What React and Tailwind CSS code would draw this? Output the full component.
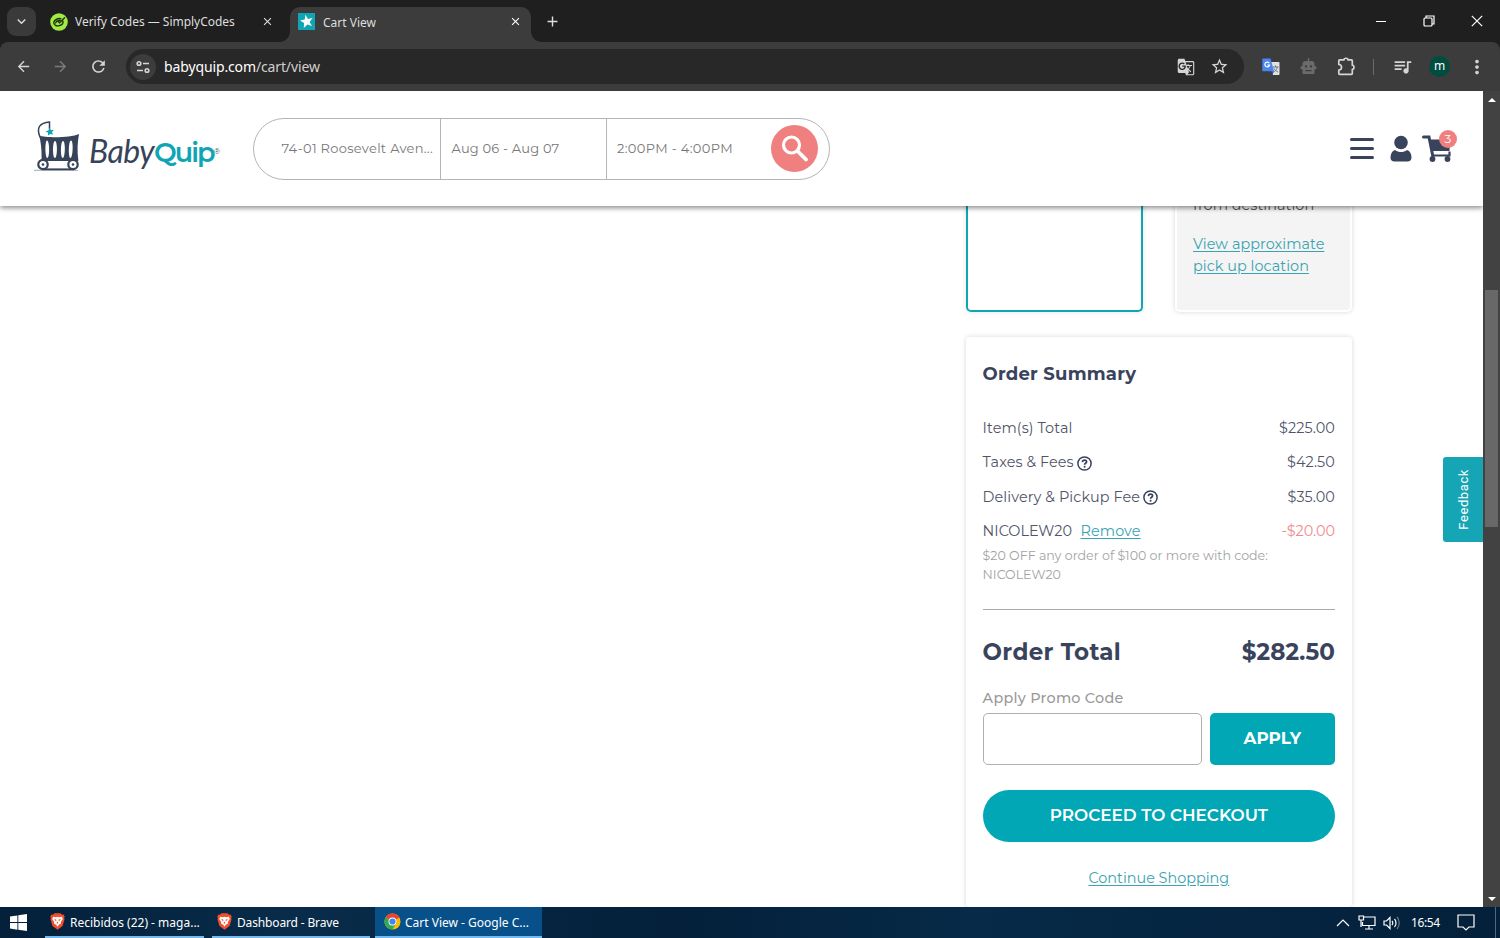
import React from 'react';
import {
  MdGTranslate,
  MdOutlineStarBorder,
  MdQueueMusic,
  MdArrowBack,
  MdArrowForward,
  MdRefresh,
  MdClose,
  MdAdd,
  MdMoreVert,
  MdKeyboardArrowDown,
} from 'react-icons/md';

const TabStrip = () => (
  <div className="flex h-[42px] shrink-0 items-start bg-[#1f1f1f] text-[#dedede]">
    <div className="ml-[7px] mt-[7px] flex h-[29px] w-[29px] items-center justify-center rounded-[9px] bg-[#3a3a3a]">
      <MdKeyboardArrowDown className="h-[17px] w-[17px]" />
    </div>
    <div className="flex h-[43px] w-[254px] items-center pl-[14px] pr-[16px]">
      <svg className="h-[18px] w-[18px]" viewBox="0 0 18 18" fill="none">
        <circle cx="9" cy="9" r="8.8" fill="#a3e945" />
        <path d="M14.6 4.8 9.6 9.8 7.7 8.2M10.8 5.6C7.6 5 4.2 6.8 3.8 9.4c-.4 2.8 3 4 5.6 3.2 2.4-.7 4-2.6 3.5-4.5M5.6 10l1.2-2 3.2-.7" stroke="#17320c" strokeWidth="1.4" strokeLinecap="round" />
      </svg>
      <span className="ml-[7px] flex-1 whitespace-nowrap pt-px text-[12px] tracking-[-0.02px]">Verify Codes — SimplyCodes</span>
      <MdClose className="h-[13px] w-[13px]" />
    </div>
    <div className="relative mt-[7px] flex h-[35px] w-[241px] items-center rounded-t-[10px] bg-[#3c3c3c] pb-[6px] pl-[8px] pr-[9px]">
      <span className="absolute -left-[10px] bottom-0 h-[10px] w-[10px] bg-[radial-gradient(circle_at_0_0,transparent_9.5px,#3c3c3c_10px)]" />
      <span className="absolute -right-[10px] bottom-0 h-[10px] w-[10px] bg-[radial-gradient(circle_at_100%_0,transparent_9.5px,#3c3c3c_10px)]" />
      <svg className="h-[17px] w-[17px]" viewBox="0 0 17 17">
        <rect width="17" height="17" fill="#10a5b5" />
        <path d="M7.4 1.8 10 6l4.600-1-3 3.900 2.400 4.200-4.500-1.600-3.700 3.500.3-5.100-4-2.500 4.700-1z" fill="#fff" />
      </svg>
      <span className="ml-[8px] flex-1 pt-[2px] text-[12px]">Cart View</span>
      <MdClose className="h-[13px] w-[13px] text-white" />
    </div>
    <MdAdd className="ml-[13px] mt-[13px] h-[17px] w-[17px]" />
    <div className="ml-auto mr-[17px] mt-[15px] flex items-center gap-[36px] text-white">
      <svg className="h-3 w-3" viewBox="0 0 12 12"><path d="M1 6.5h10" stroke="currentColor" /></svg>
      <svg className="h-3 w-3" viewBox="0 0 12 12" fill="none" stroke="currentColor" strokeWidth="1.2">
        <rect x="1" y="3" width="8" height="8" rx="1" />
        <path d="M3 3V1h8v8H9" />
      </svg>
      <svg className="h-3 w-3" viewBox="0 0 12 12"><path d="m.8.8 10.4 10.4M11.2.8.8 11.2" stroke="currentColor" strokeWidth="1.2" /></svg>
    </div>
  </div>
);

const Toolbar = () => (
  <div className="bg-[#1f1f1f]">
    <div className="flex h-[49px] items-center rounded-t-[8px] bg-[#3c3c3c] text-[#d5d5d5]">
      <MdArrowBack className="ml-[15px] h-[17px] w-[17px]" />
      <MdArrowForward className="ml-[20px] h-[17px] w-[17px] text-[#7b7b7b]" />
      <MdRefresh className="ml-[20px] h-[19px] w-[19px]" />
      <div className="ml-[18px] flex h-[35px] w-[1118px] items-center rounded-full bg-[#282828] pl-[4px] pr-[15px]">
        <div className="flex h-[26px] w-[26px] items-center justify-center rounded-full bg-[#3c3c3c]">
          <svg className="h-[14px] w-[14px]" viewBox="0 0 14 14" fill="none" stroke="currentColor" strokeWidth="1.6">
            <circle cx="3" cy="3.5" r="1.8" />
            <path d="M7 3.5h6M1 10.5h6" />
            <circle cx="11" cy="10.5" r="1.8" />
          </svg>
        </div>
        <span className="ml-[8px] flex-1 text-[14px] tracking-[-0.13px] text-[#d0d0d0]">
          <span className="text-white">babyquip.com</span>/cart/view
        </span>
        <MdGTranslate className="h-[18px] w-[18px]" />
        <MdOutlineStarBorder className="ml-[15px] h-[19px] w-[19px]" />
      </div>
      <svg className="ml-[18px] h-[18px] w-[18px]" viewBox="0 0 18 18">
        <path d="M7 4h9.500c.8 0 1 .5 1 1v11c0 .8-.4 1-1 1H11z" fill="#dfe1e4" />
        <path d="M10.500 9h6M13.500 7.500V9M15.500 9c-.5 2-2 4-4 5M12 10.500c.7 1.500 2.200 2.700 4 3.500" stroke="#6d7782" fill="none" />
        <path d="M1.300.5h7.200l3.500 12.800H1.300c-.6 0-1-.4-1-1V1.500c0-.6.4-1 1-1z" fill="#4a86ee" />
        <path d="m9 13.300 3 0-1.500 3.500z" fill="#2757b5" />
        <path d="M7.300 5.200A2.400 2.400 0 1 0 7.600 7H5.400" stroke="#fff" strokeWidth="1.200" fill="none" />
      </svg>
      <svg className="ml-[20px] h-[17px] w-[17px]" viewBox="0 0 17 17">
        <path fillRule="evenodd" d="M8 3V2a1 1 0 1 1 1 0v1h2.500c1.800 0 3 1.200 3 3v2c1.300 0 2 .8 2 1.800s-.7 1.700-2 1.700V15c0 .7-.4 1-1 1h-10c-.6 0-1-.3-1-1v-3.500c-1.300 0-2-.7-2-1.700S1.200 8 2.500 8V6c0-1.800 1.200-3 3-3zM6 7.200a1.200 1.200 0 1 0 0 2.400 1.200 1.200 0 0 0 0-2.400zm5 0a1.200 1.200 0 1 0 0 2.400 1.200 1.200 0 0 0 0-2.400zM5.500 12v1.200h6V12z" fill="#6b6b6b" />
      </svg>
      <svg className="ml-[20px] h-[19px] w-[19px]" viewBox="0 0 18 18" fill="none">
        <path d="M2.500 2.800h4a2 1.600 0 0 1 4 0h3.200a.8.8 0 0 1 .8.8v4.200a1.600 2 0 0 1 0 4v3.800a.8.8 0 0 1-.8.8H2.500a.8.8 0 0 1-.8-.8v-3.300a2.600 2.600 0 0 0 0-5.200V3.600a.8.8 0 0 1 .8-.8z" stroke="currentColor" strokeWidth="1.600" strokeLinejoin="round" />
      </svg>
      <span className="ml-[17px] h-[16px] w-[1px] bg-[#6c6c6c]" />
      <MdQueueMusic className="ml-[18px] h-[21px] w-[21px]" />
      <div className="ml-[16px] flex h-[21px] w-[21px] items-center justify-center rounded-full bg-[#004d40] pb-[2px] text-[12px] text-white">m</div>
      <MdMoreVert className="ml-[16px] h-[22px] w-[22px]" />
    </div>
  </div>
);

const Logo = () => (
  <div className="flex w-[186px] items-center pb-[4px]">
    <svg className="h-[54px] w-[48px] shrink-0" viewBox="0 0 48 54" fill="none">
      <path d="M6 17C2 7 6 3 15.500 2v7" stroke="#364358" strokeWidth="1.500" />
      <path d="m15.500 7.800 1.400 2.300 2.800-.2-1.700 2.200 1 2.600-2.700-.8-2.300 1.600v-2.800l-2.400-1.500 2.700-.6z" fill="#10a5b5" />
      <path fillRule="evenodd" d="M5 15.500c7 2.500 31 2.500 40-1.500-1.500 8-2 17-.6 27H7.500C8 31 7 22 5 15.500zm8 5c-2.200 0-2 17 .3 17.500 2.700 0 2.400-17.500-.3-17.500zm8 .5c-2.600 0-2.600 17 0 17s2.700-17 0-17zm8 0c-2.600 0-2.700 17-.2 17s2.900-17 .2-17zm8-.5c-2.600 0-2.900 17.500-.5 17.500s3.200-17.500.5-17.500z" fill="#364358" />
      <path d="M0 50.300h44" stroke="#8d94a0" strokeWidth=".8" />
      <path d="M9 49.300h31" stroke="#364358" strokeWidth="1.800" />
      <circle cx="9" cy="44.500" r="4.700" fill="#fff" stroke="#364358" strokeWidth="2.200" />
      <circle cx="39" cy="44.500" r="4.700" fill="#fff" stroke="#364358" strokeWidth="2.200" />
      <circle cx="9" cy="44.500" r="1.300" fill="#364358" />
      <circle cx="39" cy="44.500" r="1.300" fill="#364358" />
    </svg>
    <div className="ml-[7px] flex items-baseline whitespace-nowrap pt-[9px] leading-none">
      <span className="font-[Lato,sans-serif] text-[32px] italic tracking-[-0.6px] text-[#364358]">Baby</span>
      <span className="-translate-y-px font-[Montserrat,Inter,sans-serif] text-[27px] font-semibold tracking-[-1.900px] text-[#10a5b5]">Quip</span>
      <span className="-translate-y-[9px] text-[8px] text-[#364358]">®</span>
    </div>
  </div>
);

const SiteHeader = () => (
  <header className="relative z-10 flex h-[115px] shrink-0 items-center bg-white pl-[34px] pr-[31.500px] shadow-[0_2px_5px_rgba(0,0,0,0.45)]">
    <Logo />
    <div className="ml-[32.500px] flex h-[62px] w-[577px] items-center rounded-full border border-[#b5b5b5] text-[13px] text-[#777]">
      <div className="flex h-full w-[187.500px] items-center whitespace-nowrap border-r border-[#b5b5b5] pl-[28px] pt-px tracking-[0.3px]">74-01 Roosevelt Aven...</div>
      <div className="flex h-full w-[166px] items-center whitespace-nowrap border-r border-[#b5b5b5] pl-[10.500px] tracking-[0.2px]">Aug 06 - Aug 07</div>
      <div className="w-[164px] whitespace-nowrap pl-[10px] tracking-[0.33px]">2:00PM - 4:00PM</div>
      <div className="flex h-[47px] w-[47px] items-center justify-center rounded-full bg-[#f08080]">
        <svg className="h-[27px] w-[27px]" viewBox="0 0 27 27" fill="none" stroke="#fff" strokeWidth="3.200">
          <circle cx="10.500" cy="10" r="8" />
          <path d="m16.500 16 8.500 8.500" strokeWidth="3.800" strokeLinecap="round" />
        </svg>
      </div>
    </div>
    <div className="ml-auto flex items-center text-[#39435c]">
      <svg className="h-[22px] w-[26px]" viewBox="0 0 26 22" stroke="currentColor" strokeWidth="3" strokeLinecap="round">
        <path d="M2.500 1.500h21M2.500 10.500h21M2.500 19.500h21" />
      </svg>
      <svg className="ml-[15px] h-[27px] w-[22px]" viewBox="0 0 22 27" fill="currentColor">
        <circle cx="11" cy="7.500" r="6.800" />
        <path d="M5 15c4 2.700 8 2.700 12 0 3 1 4.500 4 4.500 7.500 0 2.500-1.500 4-4 4h-13c-2.500 0-4-1.500-4-4C.5 19 2 16 5 15z" />
      </svg>
      <div className="relative ml-[10px]">
        <svg className="h-[27px] w-[30px]" viewBox="0 0 30 27" fill="none" stroke="currentColor">
          <path d="M1.500 2H7l3.800 19" strokeWidth="3" strokeLinecap="round" />
          <path d="M7 4.500h21l-.5 11.500H9.500z" fill="currentColor" stroke="none" />
          <path d="M10.500 20.500h17v-4" strokeWidth="2.200" />
          <circle cx="10.500" cy="24" r="2.900" fill="currentColor" stroke="none" />
          <circle cx="25.500" cy="24" r="2.900" fill="currentColor" stroke="none" />
        </svg>
        <span className="absolute -right-[5.500px] -top-[5px] flex h-[18px] w-[18px] items-center justify-center rounded-full bg-[#f08080] text-[12px] text-white">3</span>
      </div>
    </div>
  </header>
);

const HelpIcon = () => (
  <svg className="h-[15px] w-[15px]" viewBox="0 0 15 15" fill="none" stroke="#39435c">
    <circle cx="7.5" cy="7.5" r="6.6" strokeWidth="1.5" />
    <path d="M5.4 6.1c.1-1.300 1-2 2.200-2 1.200 0 2 .7 2 1.700 0 1.500-2 1.500-2 3" strokeWidth="1.700" />
    <circle cx="7.600" cy="10.700" r="1" fill="#39435c" stroke="none" />
  </svg>
);

const feeRows = [
  { label: 'Item(s) Total', amount: '$225.00' },
  { label: 'Taxes & Fees', amount: '$42.50', help: true },
  { label: 'Delivery & Pickup Fee', amount: '$35.00', help: true },
];

const OrderSummary = () => (
  <section className="mt-[25px] h-[700px] w-[386px] rounded-[4px] bg-white pl-[16.600px] pr-[17px] pt-[24px] text-[#4f5468] shadow-[0_0_5px_rgba(0,0,0,0.16)]">
    <h2 className="text-[18px] font-bold leading-[26px] tracking-[0.22px] text-[#39435c]">Order Summary</h2>
    <div className="mt-[24.500px] text-[14.400px]">
      {feeRows.map((row) => (
        <div key={row.label} className="flex h-[34.400px] items-center justify-between">
          <span className="flex items-center gap-[3px] tracking-[0.1px]">
            {row.label}
            {row.help && <HelpIcon />}
          </span>
          <span className="tracking-[0.1px]">{row.amount}</span>
        </div>
      ))}
      <div className="flex h-[34.400px] items-center justify-between">
        <span>
          NICOLEW20
          <a className="ml-[8.500px] tracking-[0.1px] text-[#3aa3b1] underline underline-offset-2">Remove</a>
        </span>
        <span className="text-[#f08a8e]">-$20.00</span>
      </div>
    </div>
    <p className="-mt-[3.500px] text-[12.600px] leading-[19px] text-[#a3a3a3]">
      $20 OFF any order of $100 or more with code:
      <br />
      NICOLEW20
    </p>
    <hr className="mt-[25px] border-[#aaa]" />
    <div className="mt-[26px] flex items-center justify-between text-[23px] font-bold leading-[32px] text-[#39435c]">
      <span className="tracking-[0.35px]">Order Total</span>
      <span className="tracking-[0.1px]">$282.50</span>
    </div>
    <label className="mt-[20px] block text-[14.400px] font-medium leading-[20px] tracking-[0.25px] text-[#999]">Apply Promo Code</label>
    <div className="mt-[5px] flex gap-[8px]">
      <input className="h-[52px] w-[219px] rounded-[5px] border border-[#b0b0b0]" />
      <button className="h-[52px] flex-1 rounded-[5px] bg-[#02a7b6] text-[16.800px] font-bold text-white">APPLY</button>
    </div>
    <button className="mt-[25px] h-[52px] w-full rounded-full bg-[#02a7b6] text-[16.800px] font-semibold text-white">PROCEED TO CHECKOUT</button>
    <div className="mt-[25px] text-center text-[14.400px] leading-[22px]">
      <a className="text-[#3aa3b1] underline underline-offset-2">Continue Shopping</a>
    </div>
  </section>
);

const CartPage = () => (
  <div className="relative flex w-[1483px] flex-col overflow-hidden bg-white font-[Montserrat,Inter,sans-serif]">
    <SiteHeader />
    <main className="-mt-[16px] flex min-h-0 flex-1 flex-col items-end pr-[131px]">
      <div className="flex w-[386px] shrink-0 justify-between">
        <div className="h-[122px] w-[177px] rounded-b-[5px] border-2 border-t-0 border-[#10a5b5] shadow-[0_0_5px_rgba(0,0,0,0.12)]" />
        <div className="h-[122px] w-[177px] rounded-b-[5px] border-2 border-t-0 border-white bg-[#f4f4f4] pl-[16px] pt-[4px] text-[14.4px] leading-[22px] tracking-[0.05px] text-[#555] shadow-[0_0_5px_rgba(0,0,0,0.16)]">
          <p className="whitespace-nowrap">from destination</p>
          <a className="mt-[16.5px] block whitespace-nowrap text-[#3aa3b1] underline underline-offset-2">
            View approximate
            <br />
            pick up location
          </a>
        </div>
      </div>
      <OrderSummary />
    </main>
    <div className="absolute right-0 top-[366px] flex h-[85px] w-[40px] items-center justify-center rounded-l-[3px] bg-[#16a5b5]">
      <span className="rotate-180 pr-px font-[Roboto,sans-serif] text-[13px] tracking-[0.6px] text-white [writing-mode:vertical-rl]">Feedback</span>
    </div>
  </div>
);

const Scrollbar = () => (
  <div className="flex w-[17px] flex-col items-center bg-[#424242]">
    <div className="flex h-[17px] items-center">
      <span className="border-x-4 border-b-4 border-x-transparent border-b-white" />
    </div>
    <div className="mt-[182px] h-[237px] w-[13px] bg-[#686868]" />
    <div className="mt-auto flex h-[17px] items-center">
      <span className="border-x-4 border-t-4 border-x-transparent border-t-white" />
    </div>
  </div>
);

const ChromeIcon = () => (
  <svg className="h-[17px] w-[17px] shrink-0" viewBox="0 0 18 18">
    <circle cx="9" cy="9" r="8.5" fill="#fbbc05" />
    <path d="M9 9 1.6 4.75A8.5 8.5 0 0 1 16.4 4.75z" fill="#ea4335" />
    <path d="M9 9 1.6 4.75A8.5 8.5 0 0 0 9 17.5l3.7-6.4z" fill="#34a853" />
    <circle cx="9" cy="9" r="4.2" fill="#fff" />
    <circle cx="9" cy="9" r="3.3" fill="#4285f4" />
  </svg>
);

const BraveIcon = () => (
  <svg className="h-[17px] w-[15px] shrink-0" viewBox="0 0 15 17">
    <path d="M4.500.3h6l1.500 1.500 1.500-.2 1.200 2-.5 1.400.3 1.500-2 6.500L7.500 16.800 2.500 13 .5 6.500.8 5 .3 3.600l1.200-2 1.500.2z" fill="#f1502a" />
    <path d="m3.200 3.800 2.800.5 1.500-.5 1.500.5 2.800-.5 1 2.200-2 3 .2 1.600-2.200 1.200-1.300 2-1.300-2L4 10.600 4.200 9l-2-3z" fill="#fff" />
    <path d="m4 5.800 2.500 1-.5 1.700zM11 5.800l-2.500 1 .5 1.700zM7.500 8.500l1 1.600-1 .6-1-.6z" fill="#f1502a" />
  </svg>
);

const Taskbar = () => (
  <div className="flex h-[31px] shrink-0 bg-[linear-gradient(90deg,#04203a,#082c4a_20%,#04203a_45%,#062a48_65%,#04203a)] text-[12px] text-white">
    <div className="flex w-[45px] items-center pl-[10px]">
      <svg className="h-[17px] w-[17px]" viewBox="0 0 17 17" fill="#fff">
        <path d="M0 2.5 7.4 1.4v6.7H0zM8.3 1.3 17 0v8.1H8.3zM0 9h7.4v6.7L0 14.6zM8.3 9H17v8l-8.7-1.2z" />
      </svg>
    </div>
    <div className="flex w-[159px] items-center whitespace-nowrap border-b-2 border-[#76b9ed] pl-[5px]">
      <BraveIcon />
      <span className="ml-[5px] pt-[2px]">Recibidos (22) - maga...</span>
    </div>
    <div className="ml-[8px] flex w-[158px] items-center whitespace-nowrap border-b-2 border-[#76b9ed] pl-[5px]">
      <BraveIcon />
      <span className="ml-[5px] pt-[2px] tracking-[-0.15px]">Dashboard - Brave</span>
    </div>
    <div className="ml-[5px] flex w-[167px] items-center whitespace-nowrap border-b-2 border-[#76b9ed] bg-[#075089] pl-[9px]">
      <ChromeIcon />
      <span className="ml-[4px] pt-[2px]">Cart View - Google C...</span>
    </div>
    <div className="ml-auto flex items-center">
      <svg className="h-[8px] w-[14px]" viewBox="0 0 14 8" fill="none" stroke="#fff" strokeWidth="1.2"><path d="m1 7 6-6 6 6" /></svg>
      <svg className="ml-[8px] h-[15px] w-[18px]" viewBox="0 0 18 15" fill="none" stroke="#fff" strokeWidth="1.2">
        <path d="M6 2h11v8.5H4.5V7M11 10.5V14M7 14h8M1 1h4.5v4H1zM3 5v7" />
      </svg>
      <svg className="ml-[7px] h-[14px] w-[17px]" viewBox="0 0 17 14" fill="none" stroke="#fff" strokeWidth="1.2">
        <path d="M1 5h2.5L7 1.5v11L3.500 9H1zM9 5c1 1 1 3 0 4M11.500 3c2 2 2 6 0 8" />
        <path d="M14 1c3 3.5 3 8.5 0 12" stroke="#68798a" />
      </svg>
      <span className="ml-[11px] w-[28px] whitespace-nowrap tracking-[-0.4px]">16:54</span>
      <svg className="ml-[18px] h-[17px] w-[18px]" viewBox="0 0 18 17" fill="none" stroke="#fff" strokeWidth="1.2"><path d="M1 1h16v12h-5l-3 3-3-3H1z" /></svg>
      <span className="ml-[20px] mr-[4px] h-[31px] w-[1px] bg-[#50687e]" />
    </div>
  </div>
);

export default function App() {
  return (
    <div className="flex h-[938px] w-[1500px] flex-col overflow-hidden font-['Noto_Sans','Open_Sans',sans-serif]">
      <TabStrip />
      <Toolbar />
      <div className="flex min-h-0 flex-1">
        <CartPage />
        <Scrollbar />
      </div>
      <Taskbar />
    </div>
  );
}
